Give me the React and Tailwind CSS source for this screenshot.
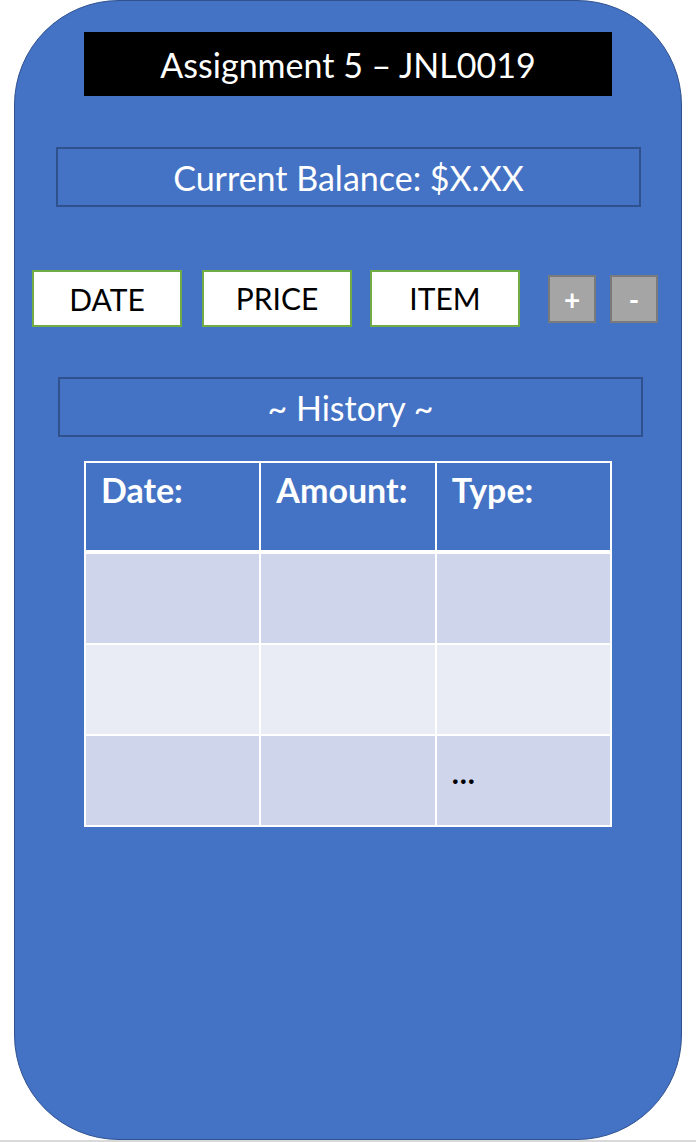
export default function App() {
  const font = { fontFamily: 'Lato, "Open Sans", sans-serif' };
  const rows = ['bg-[#cfd5ea]', 'bg-[#e9ebf5]', 'bg-[#cfd5ea]'];

  return (
    <div className="w-[696px] h-[1142px] bg-white flex flex-col" style={font}>
      <div className="ml-[14px] w-[668px] h-[1140px] rounded-[105px] border border-[#2f528f] bg-[#4472c4] flex flex-col">
        {/* title */}
        <div className="ml-[69px] mt-[31px] w-[528px] h-[64px] bg-black flex items-center justify-center text-white text-[34px]">
          Assignment 5 – JNL0019
        </div>

        {/* balance */}
        <div className="ml-[41px] mt-[51px] w-[585px] h-[60px] border-2 border-[#2f528f] flex items-center justify-center text-white text-[34px]">
          Current Balance: $X.XX
        </div>

        {/* inputs */}
        <div className="ml-[17px] mt-[63px] h-[57px] flex items-center">
          <div className="w-[150px] h-[57px] bg-white border-2 border-[#70ad47] flex items-center justify-center text-black text-[30px] pt-[2px]">
            DATE
          </div>
          <div className="ml-[20px] w-[150px] h-[57px] bg-white border-2 border-[#70ad47] flex items-center justify-center text-black text-[30px]">
            PRICE
          </div>
          <div className="ml-[18px] w-[150px] h-[57px] bg-white border-2 border-[#70ad47] flex items-center justify-center text-black text-[30px]">
            ITEM
          </div>
          <button className="ml-[28px] w-[48px] h-[48px] bg-[#a5a5a5] border-2 border-[#7a7a7a] flex items-center justify-center text-white text-[28px] font-bold">
            +
          </button>
          <button className="ml-[14px] w-[48px] h-[48px] bg-[#a5a5a5] border-2 border-[#7a7a7a] flex items-center justify-center text-white text-[28px] font-bold">
            -
          </button>
        </div>

        {/* history */}
        <div className="ml-[43px] mt-[50px] w-[585px] h-[60px] border-2 border-[#2f528f] flex items-center justify-center text-white text-[34px]">
          ~ History ~
        </div>

        {/* table */}
        <div className="ml-[69px] mt-[24px] w-[528px] bg-white p-[2px] flex flex-col">
          <div className="grid grid-cols-3 gap-[2px] h-[87px]">
            {['Date:', 'Amount:', 'Type:'].map((h) => (
              <div key={h} className="bg-[#4472c4] text-white font-bold text-[34px] pl-[15px] pt-[10px] leading-none">
                {h}
              </div>
            ))}
          </div>
          <div className="h-[4px]" />
          <div className="flex flex-col gap-[2px]">
            {rows.map((bg, i) => (
              <div key={i} className="grid grid-cols-3 gap-[2px] h-[89px]">
                <div className={bg} />
                <div className={bg} />
                <div className={`${bg} pl-[15px] flex items-center pb-[16px] text-black text-[30px] font-bold`}>
                  {i === 2 ? '…' : ''}
                </div>
              </div>
            ))}
          </div>
        </div>
      </div>
      <div className="h-[2px] bg-[#d9d9d9]" />
    </div>
  );
}
